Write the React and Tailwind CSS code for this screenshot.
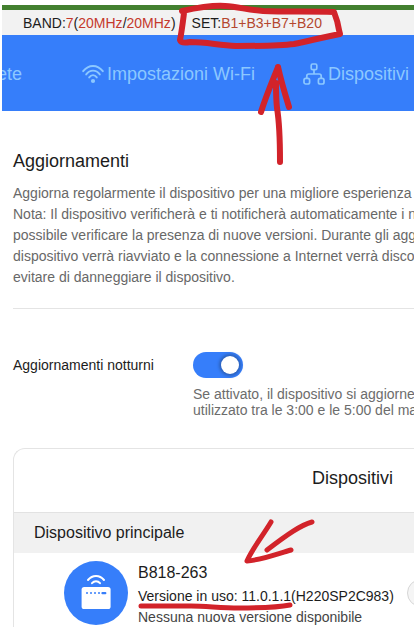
const intro = [
    'Aggiorna regolarmente il dispositivo per una migliore esperienza',
    'Nota: Il dispositivo verificherà e ti notificherà automaticamente i n',
    'possibile verificare la presenza di nuove versioni. Durante gli agg',
    'dispositivo verrà riavviato e la connessione a Internet verrà disco',
    'evitare di danneggiare il dispositivo.',
];

function WifiIcon() {
    return (
        <svg width="22" height="20" viewBox="0 0 22 20" fill="none" stroke="currentColor" strokeWidth="1.9" strokeLinecap="round" aria-hidden="true">
            <path d="M1.2 7.2C6.6 0.2 15.4 0.2 20.8 7.2" />
            <path d="M4.2 10.4C8 5.4 14 5.4 17.8 10.4" />
            <path d="M7.2 13.4C9.4 10.4 12.6 10.4 14.8 13.4" />
            <circle cx="11" cy="17" r="2.1" fill="currentColor" stroke="none" />
        </svg>
    );
}

function DevicesIcon() {
    return (
        <svg width="22" height="22" viewBox="0 0 22 22" fill="none" stroke="currentColor" strokeWidth="1.7" aria-hidden="true">
            <rect x="8.2" y="1" width="5.6" height="5.6" rx="1.4" />
            <rect x="1" y="15.4" width="5.6" height="5.6" rx="1.8" />
            <rect x="15.4" y="15.4" width="5.6" height="5.6" rx="1.8" />
            <path d="M11 6.6v4.4M3.8 15.4v-2.4a2 2 0 0 1 2-2h10.4a2 2 0 0 1 2 2v2.4" />
        </svg>
    );
}

function RouterIcon() {
    return (
        <svg className="size-16 shrink-0" viewBox="0 0 64 64" aria-hidden="true">
            <circle cx="32" cy="32" r="32" fill="#367efa" />
            <g fill="none" stroke="#fff" strokeWidth="2" strokeLinecap="round">
                <path d="M24 19C28.4 13.6 35.6 13.6 40 19" />
                <path d="M28 22.2C30.2 19.6 33.8 19.6 36 22.2" />
            </g>
            <rect x="17.6" y="26" width="29" height="22" rx="2.6" fill="#fff" />
            <g fill="#367efa">
                <circle cx="23" cy="32" r="1" />
                <circle cx="27" cy="32" r="1" />
                <circle cx="31" cy="32" r="1" />
                <circle cx="35" cy="32" r="1" />
                <rect x="37.4" y="31" width="5" height="2.2" rx="1" />
            </g>
        </svg>
    );
}

// Hand-drawn red marks over the page
function Marks() {
    return (
        <svg
            className="pointer-events-none absolute left-0 top-0"
            width="414"
            height="627"
            viewBox="0 0 414 627"
            fill="none"
            stroke="#d2232a"
            strokeWidth="6"
            strokeLinecap="round"
            strokeLinejoin="round"
            aria-hidden="true"
        >
            <path d="M184 13C183 21 182 30 180 40C181 43 185 43 190 42C207 42 217 45 236 46C258 46 279 46 294 44C309 41 324 37 340 34L339 30C338 23 336 17 334 12C309 11 288 12 263 11C248 10 239 7 225 6C211 5 196 8 182 11" />
            <path d="M280 162C280 145 280 126 277 108C276 99 276 91 276 83M278 67C272 82 266 96 261 112M278 67C281 81 285 94 289 107" />
            <path d="M271 522C262 537 252 549 247 561C261 560 277 554 291 550M312 522C301 525 288 534 267 550" strokeWidth="5" />
            <path d="M141 606H191C206 606 221 608 239 608C257 608 275 608 290 605" strokeWidth="5" />
        </svg>
    );
}

export default function App() {
    return (
        <div className="relative overflow-hidden bg-white pt-[5px] font-['Liberation_Sans',Arial,sans-serif] text-sm text-[#1c1c1c]">
            <div className="ml-0.5">
                <div className="h-[5px] bg-[#43802f]" />
                <div className="flex h-[25px] items-center gap-4 whitespace-nowrap bg-[#f2f2f2] pl-[21px]">
                    <p>
                        BAND:<span className="text-[#c5392c]">7</span>(<span className="text-[#c5392c]">20MHz</span>/<span className="text-[#c5392c]">20MHz</span>)
                    </p>
                    <p>
                        SET:<span className="text-[#b4472e]">B1+B3+B7+B20</span>
                    </p>
                </div>
                <nav className="flex h-19 items-center whitespace-nowrap bg-[#367efa] pt-0.5 text-lg text-[#8cc8ff]">
                    <a href="#rete" className="flex w-5 shrink-0 justify-end overflow-hidden">ete</a>
                    <a href="#wifi" className="ml-15 flex items-center gap-[3px]">
                        <WifiIcon />
                        Impostazioni Wi-Fi
                    </a>
                    <a href="#dispositivi" className="ml-12 flex items-center gap-[3px]">
                        <DevicesIcon />
                        Dispositivi
                    </a>
                </nav>
            </div>

            <main className="pl-[13px]">
                <section className="whitespace-nowrap pt-9">
                    <h1 className="text-lg">Aggiornamenti</h1>
                    <p className="mt-2 leading-[21px] text-[#686868]">
                        {intro.map((line) => (
                            <span key={line} className="block">{line}</span>
                        ))}
                    </p>
                </section>

                <section className="mt-5 flex border-t border-[#e4e4e4] pt-[43px]">
                    <label htmlFor="night" className="flex h-[26px] w-[180px] shrink-0 items-center">Aggiornamenti notturni</label>
                    <div className="whitespace-nowrap">
                        <span className="relative flex h-[26px] w-[50px]">
                            <input
                                id="night"
                                type="checkbox"
                                role="switch"
                                defaultChecked
                                className="peer size-full appearance-none rounded-full bg-[#b8b8b8] checked:bg-[#367efa]"
                            />
                            <span className="pointer-events-none absolute left-1 top-1 size-[18px] rounded-full bg-white shadow-[0_0_3px_2px_#2c62bc] peer-checked:left-7" />
                        </span>
                        <p className="mt-2 leading-4 text-[#6c6c6c]">
                            <span className="block">Se attivato, il dispositivo si aggiorne</span>
                            <span className="block">utilizzato tra le 3:00 e le 5:00 del ma</span>
                        </p>
                    </div>
                </section>

                <section className="mt-[30px] rounded-tl-xl border-l border-t border-[#e4e4e4]">
                    <h2 className="flex h-[63px] items-center justify-end pr-[21px] pb-1.5 text-lg">Dispositivi</h2>
                    <h3 className="flex h-[41px] items-center border-t border-[#e2e2e2] bg-[#f1f1f1] pl-5 text-base">Dispositivo principale</h3>
                    <div className="flex gap-2.5 overflow-hidden whitespace-nowrap pl-[50px] pt-2">
                        <div className="shrink-0">
                            <RouterIcon />
                        </div>
                        <div className="shrink-0">
                            <p className="text-base">B818-263</p>
                            <p className="leading-[22px]">Versione in uso: 11.0.1.1(H220SP2C983)</p>
                            <p className="text-[#444]">Nessuna nuova versione disponibile</p>
                        </div>
                        <button type="button" aria-label="Aggiorna" className="ml-[3px] mt-[18px] h-7 w-20 shrink-0 rounded-full border border-[#d6d6d6] bg-[#f5f5f5]" />
                    </div>
                </section>
            </main>
            <Marks />
        </div>
    );
}
